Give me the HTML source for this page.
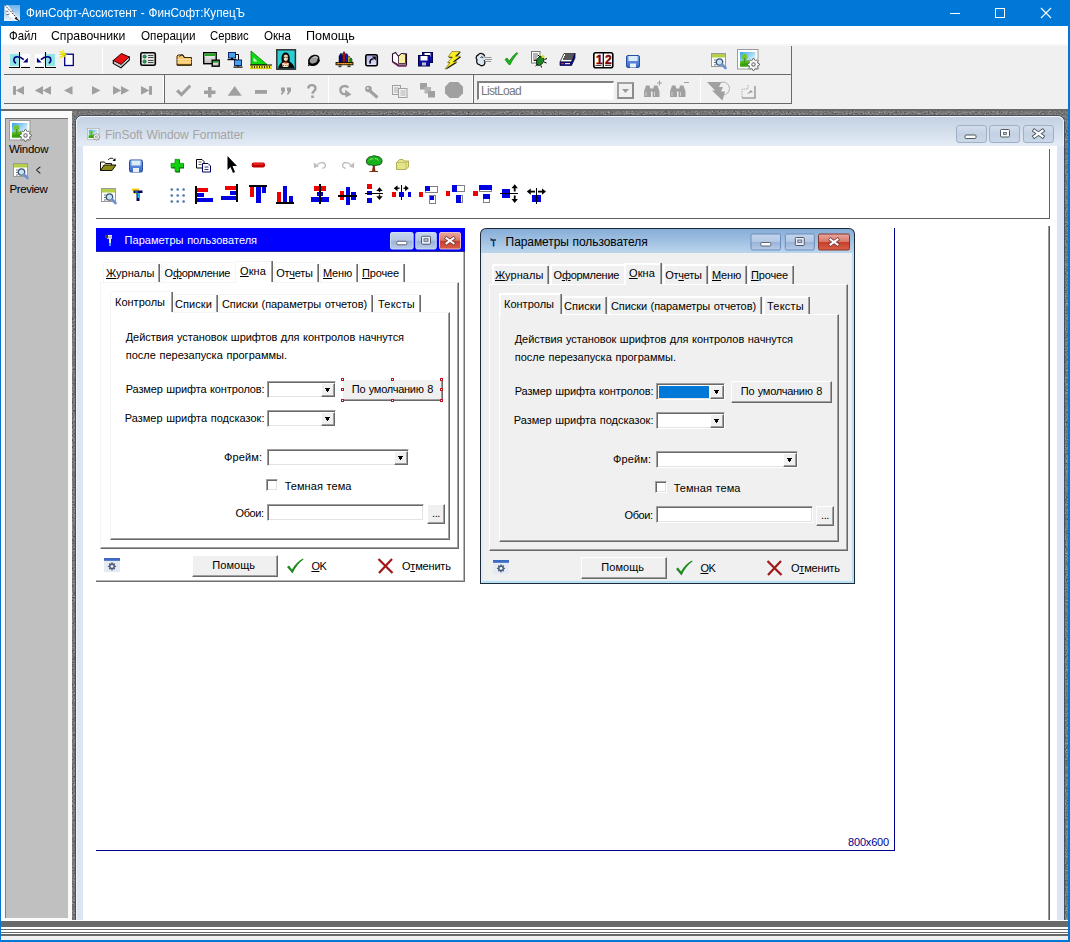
<!DOCTYPE html>
<html lang="ru"><head><meta charset="utf-8"><title>ФинСофт-Ассистент - ФинСофт:КупецЪ</title>
<style>
html,body{margin:0;padding:0}
body{width:1070px;height:942px;position:relative;overflow:hidden;background:#f0f0f0;font-family:'Liberation Sans',sans-serif;font-size:11px}
div,span.t,svg{position:absolute;box-sizing:border-box}
span.t{white-space:pre}
u{text-decoration:underline;text-underline-offset:1px}

</style></head>
<body>
<div style="left:0px;top:0px;width:1070px;height:942px;background:#0078d7;"></div>
<div style="left:1px;top:26px;width:1067px;height:914px;background:#f0f0f0;"></div>
<div style="left:0px;top:0px;width:1070px;height:26px;background:#0078d7;"></div>
<svg style="left:0;top:0" width="1070" height="942" viewBox="0 0 1070 942"><defs><linearGradient id="ga" x1="0" y1="0" x2="0" y2="1"><stop offset="0" stop-color="#6fb0ea"/><stop offset="1" stop-color="#eaf5fc"/></linearGradient></defs><rect x="4" y="5" width="16" height="16" fill="url(#ga)" /><path d="M4.800 5.300l3.200 .200 11.500 14.500-3 .3L11 17.500 6.500 13.500 5 9z" fill="#fff" /><path d="M5 5.300l12.500 13.200" fill="none" stroke="#111" stroke-width="1" stroke-dasharray="1.600 1.100"/><path d="M15.500 17.200l4.300 3.500-.600.600-4.500-2.600z" fill="#111" /><path d="M6 11l2.500 .8M6.500 14.500l3-.3M12 10.500l1.500 1.200" fill="none" stroke="#445" stroke-width="0.8" /></svg>
<span class="t" style="left:26.0px;top:6.3px;font-size:13px;line-height:13px;color:#fff;transform:scaleX(0.9012);transform-origin:0 0;word-spacing:0.6px;">ФинСофт-Ассистент - ФинСофт:КупецЪ</span>
<svg style="left:940px;top:0" width="130" height="26" viewBox="0 0 130 26"><g stroke="#fff" stroke-width="1" fill="none" shape-rendering="crispEdges"><path d="M9.5 13.5h10"/><rect x="55.5" y="8.5" width="9" height="9"/></g><path d="M101 8l10 10M111 8l-10 10" stroke="#fff" stroke-width="1.1" fill="none"/></svg>
<div style="left:1px;top:26px;width:1067px;height:18px;background:#fff;"></div>
<div style="left:1px;top:44px;width:1067px;height:2px;background:#f6f6f6;"></div>
<span class="t" style="left:8.5px;top:29.0px;font-size:13px;line-height:13px;color:#000;transform:scaleX(0.8759);transform-origin:0 0;">Файл</span>
<span class="t" style="left:51.2px;top:29.0px;font-size:13px;line-height:13px;color:#000;transform:scaleX(0.9433);transform-origin:0 0;">Справочники</span>
<span class="t" style="left:140.6px;top:29.0px;font-size:13px;line-height:13px;color:#000;transform:scaleX(0.8978);transform-origin:0 0;">Операции</span>
<span class="t" style="left:210.3px;top:29.0px;font-size:13px;line-height:13px;color:#000;transform:scaleX(0.8691);transform-origin:0 0;">Сервис</span>
<span class="t" style="left:264.0px;top:29.0px;font-size:13px;line-height:13px;color:#000;transform:scaleX(0.8935);transform-origin:0 0;">Окна</span>
<span class="t" style="left:306.2px;top:29.0px;font-size:13px;line-height:13px;color:#000;transform:scaleX(0.9717);transform-origin:0 0;">Помощь</span>
<div style="left:4px;top:46px;width:788px;height:29px;background:#f0f0f0;border-right:1px solid #696969;border-bottom:1px solid #696969;"></div>
<div style="left:4px;top:75px;width:788px;height:29px;background:#f0f0f0;border-right:1px solid #696969;border-bottom:1px solid #696969;"></div>
<div style="left:102px;top:47px;width:1px;height:27px;background:#fff;"></div>
<div style="left:163px;top:76px;width:1px;height:27px;background:#fff;"></div>
<div style="left:164px;top:75px;width:1px;height:28px;background:#696969;"></div>
<div style="left:328px;top:76px;width:1px;height:27px;background:#fff;"></div>
<div style="left:472px;top:76px;width:1px;height:27px;background:#fff;"></div>
<div style="left:473px;top:75px;width:1px;height:28px;background:#696969;"></div>
<div style="left:700px;top:77px;width:1px;height:25px;background:#fff;"></div>
<svg style="left:0;top:0" width="1070" height="942" viewBox="0 0 1070 942"><g shape-rendering="crispEdges"><rect x="10" y="53.5" width="8.7" height="12.8" fill="#8fe4e4" /><rect x="22" y="53.8" width="7.8" height="12.6" fill="#fff" /><rect x="18.7" y="52.2" width="1.4" height="15.6" fill="#000" /><rect x="9" y="66.8" width="11" height="1.1" fill="#000" /><rect x="21" y="66.8" width="9" height="1.1" fill="#000" /></g><g><path d="M15.900 63.300C13 61.500 13.200 56.800 17.200 56.800c2.600 0 4.600.900 6.600 2.800" fill="none" stroke="#000080" stroke-width="1.6" /><path d="M27.800 57.800v4.800h-4.800z" fill="#000080" /></g><g transform="translate(64.700,0) scale(-1,1)" shape-rendering="crispEdges"><rect x="10" y="53.5" width="8.7" height="12.8" fill="#8fe4e4" /><rect x="22" y="53.8" width="7.8" height="12.6" fill="#fff" /><rect x="18.7" y="52.2" width="1.4" height="15.6" fill="#000" /><rect x="9" y="66.8" width="11" height="1.1" fill="#000" /><rect x="21" y="66.8" width="9" height="1.1" fill="#000" /></g><g transform="translate(64.700,0) scale(-1,1)"><path d="M15.900 63.300C13 61.500 13.200 56.800 17.200 56.800c2.600 0 4.600.900 6.600 2.800" fill="none" stroke="#000080" stroke-width="1.6" /><path d="M27.800 57.800v4.800h-4.800z" fill="#000080" /></g><rect x="64.7" y="54.2" width="8.6" height="11.3" fill="#fff" stroke="#000080" stroke-width="1.300"/><path d="M59.500 51l6 6M63 50v7.500M59 54.500h7.500M60 58l5.500-5.500" fill="none" stroke="#e8e000" stroke-width="1.1" /><path d="M113.300 60.500v3l7.700 4.300 8.300-7.800v-3z" fill="#fff" stroke="#111" stroke-width="1.2" /><path d="M113.300 60.500l8.200-7 7.800 3.500-8.300 7.500z" fill="#e81010" stroke="#300000" stroke-width="1" /><path d="M114 62.300l7 3.700 8-7.300" fill="none" stroke="#999" stroke-width="0.7" /><rect x="140.8" y="52.8" width="14.5" height="12.5" fill="#e4e4e4" stroke="#000" stroke-width="1.600" rx="1.500"/><circle cx="144.6" cy="56.6" r="1.5" fill="#28a848" stroke="#053" stroke-width="0.8"/><circle cx="144.6" cy="61.6" r="1.5" fill="#28a848" stroke="#053" stroke-width="0.8"/><path d="M148 55.500h5.500M148 57.500h5.500M148 60.500h5.500M148 62.500h5.500" fill="none" stroke="#222" stroke-width="0.8" /><path d="M177 56v9.300h14.500V57.500H184l-1.300-2.500H178z" fill="#f6c66a" stroke="#3a2a00" stroke-width="1" /><path d="M177.500 59.500h14M177.500 62h14" fill="none" stroke="#ffe2a0" stroke-width="1.2" /><path d="M179.500 56.500l2.500-2 2.500 2" fill="none" stroke="#222" stroke-width="1" /><rect x="177" y="64.3" width="14.5" height="1.2" fill="#3a2a00" /><defs><linearGradient id="wg" x1="0" y1="0" x2="0" y2="1"><stop offset="0" stop-color="#fff"/><stop offset="1" stop-color="#b8b8b8"/></linearGradient></defs><rect x="203.7" y="52.7" width="12.5" height="11" fill="url(#wg)" stroke="#000" stroke-width="1.400"/><rect x="204.4" y="53.4" width="11.1" height="2.6" fill="#28a028" /><rect x="212.2" y="60.2" width="7" height="6" fill="url(#wg)" stroke="#000" stroke-width="1.400"/><rect x="212.9" y="60.9" width="5.6" height="1.8" fill="#28a028" /><rect x="228.5" y="52.5" width="7" height="5.5" fill="#49a0ee" stroke="#0a2a6a" stroke-width="1"/><rect x="227.5" y="59" width="9" height="1.2" fill="#000" /><rect x="231" y="58" width="2" height="1" fill="#000" /><rect x="234.5" y="60" width="7" height="5.5" fill="#49a0ee" stroke="#0a2a6a" stroke-width="1"/><rect x="233.5" y="66.5" width="9" height="1.2" fill="#000" /><rect x="237" y="65.5" width="2" height="1" fill="#000" /><path d="M235.500 54.500h3v5.500" fill="none" stroke="#000" stroke-width="1" /><path d="M251 51v13.500h16z" fill="#10d810" stroke="#0a7a0a" stroke-width="0.8" /><path d="M253.500 57.500v4h4z" fill="#d8ffd8" /><rect x="250" y="65.2" width="22" height="3.6" fill="#f4ec20" /><path d="M250 65h22" fill="none" stroke="#000" stroke-width="1" /><path d="M252 66v2M254.500 66v2M257 66v2M259.500 66v2M262 66v2M264.500 66v2M267 66v2M269.500 66v2" fill="none" stroke="#000" stroke-width="0.8" /><path d="M250 68.600h22" fill="none" stroke="#c8b800" stroke-width="0.8" /><rect x="276.8" y="49.8" width="18.6" height="19.4" fill="#28d0d4" stroke="#303030" stroke-width="1.500"/><path d="M278 68.500c.5-3 2-5 4-6.500-.8-2.500-.8-6 .8-8.200 1.200-1.800 4.200-1.800 5.600 0 1.600 2.200 1.600 5.200 1.200 7.700 2.500 1.500 4.500 4 5 7z" fill="#080808" /><path d="M283.800 56c0-1.800 4-1.800 4 0v3.200c0 2.300-4 2.300-4 0z" fill="#f0dcb8" /><path d="M284 57.300h1.300M286.300 57.300h1.300" fill="none" stroke="#000" stroke-width="0.8" /><path d="M282 63.500c1-1.200 5.500-1.200 7 0l-.8 3.500h-5.400z" fill="#f4e4c0" /><path d="M284.700 61.500h2.200v2h-2.200z" fill="#d02818" /><path d="M283 65.500h1M285.300 65.500h1M287.500 65.500h1" fill="none" stroke="#c03020" stroke-width="1" /><path d="M309 62.500c-1-3 1.500-6 5-6.800 3-.7 5 .8 4.600 3.500-.5 3.200-3.500 5.300-6.600 5.300-1.300 0-2.600-.5-3-2z" fill="#9c9c9c" stroke="#0c0c0c" stroke-width="1.7" /><path d="M313 57.500c1.500-.8 3.500-.8 4.500.5" fill="none" stroke="#c8c8c8" stroke-width="1.3" /><path d="M308.200 65.800l2.300-2.300" fill="none" stroke="#000" stroke-width="1.3" /><path d="M309 62.500c.5 2 2 2.500 3.500 2.500 3 0 6-2 6.500-5.300" fill="none" stroke="#000" stroke-width="2.2" /><path d="M339 63v-7l2-3 1.500 3v7z" fill="#000090" stroke="#000" stroke-width="0.5" /><path d="M342.500 63v-9l1.500-2.500 1.500 2.500v9z" fill="#a01010" stroke="#000" stroke-width="0.5" /><path d="M345.500 63v-8l1.200-1.500 1.200 1.500v8z" fill="#1818c0" stroke="#000" stroke-width="0.5" /><path d="M348 63v-6l1-1 1 1v6z" fill="#e8e020" stroke="#000" stroke-width="0.5" /><path d="M350 63v-4l1-1 1 1v4z" fill="#20b020" stroke="#000" stroke-width="0.5" /><rect x="336" y="62.5" width="17" height="2.3" fill="#e07818" stroke="#000" stroke-width="0.800"/><path d="M338 63.700h13" fill="none" stroke="#ffe060" stroke-width="0.8" stroke-dasharray="1 1.400"/><rect x="339" y="64.8" width="2" height="2" fill="#e8e020" stroke="#000" stroke-width="0.700"/><rect x="348" y="64.8" width="2" height="2" fill="#e8e020" stroke="#000" stroke-width="0.700"/><defs><linearGradient id="lav" x1="0" y1="0" x2="0" y2="1"><stop offset="0" stop-color="#a8a8e8"/><stop offset="1" stop-color="#e8e8fa"/></linearGradient></defs><rect x="365.8" y="54.8" width="11.5" height="11" fill="url(#lav)" stroke="#000" stroke-width="1.600" rx="1.500"/><path d="M370.200 63.600c-.800-3 .800-4.800 3.400-4.800" fill="none" stroke="#000" stroke-width="1.6" /><path d="M372 56.600h3.800v3.800z" fill="#000" /><path d="M392.500 54l3-1.500 3 4 3-3 5 .5v11h-8l-6-3.500z" fill="#fff" stroke="#2a0a2a" stroke-width="1.1" /><path d="M398.500 56.500l3-3 4 .5v9.500h-7z" fill="#f4f0a0" stroke="#2a0a2a" stroke-width="0.8" /><path d="M392.500 62l6 4h8" fill="none" stroke="#702058" stroke-width="1.3" /><rect x="422.5" y="52.5" width="10" height="10" fill="#1010a0" stroke="#00004a" stroke-width="1"/><rect x="424.5" y="53" width="6" height="3.5" fill="#fff" /><rect x="418.5" y="55.5" width="11" height="10.5" fill="#1010a0" stroke="#00004a" stroke-width="1"/><rect x="420.5" y="56" width="7" height="4.5" fill="#fff" /><rect x="422" y="62.5" width="4" height="3" fill="#c0c0d8" /><path d="M452 51.500h8l-4.500 4.700h5l-7.500 5.500h3.500l-11.500 7.300 5-6.500h-2.500l5-5.500h-4.500z" fill="#000" transform="translate(0.800,0.800)"/><path d="M452 51.500h8l-4.500 4.700h5l-7.500 5.500h3.500l-11.500 7.300 5-6.500h-2.500l5-5.500h-4.500z" fill="#f8f020" stroke="#504000" stroke-width="0.5" /><path d="M484.500 56.500c0-3.200-4.800-4.200-6.300-1.500-2.200.5-2.700 3.500-1.200 4.800-1 2.200.200 4.700 2.500 4.900 1.500 1.800 4.700 1.200 5.200-1 .5-1.500 0-2.700-.700-3.400" fill="#dce8f4" stroke="#101010" stroke-width="1.3" /><path d="M480.500 57.500c1-1 2.500-.5 2.500.7" fill="none" stroke="#000" stroke-width="0.9" /><path d="M484.500 57.500h7M485 59.500h7M484.500 61.500h6.500" fill="none" stroke="#8a8a8a" stroke-width="0.9" /><path d="M505 59.500l2-1.500 2.500 3c2-3.500 4.500-6.500 7.500-8.500l.8 1c-3 3-5.500 6.500-7.500 11h-1.500z" fill="#18b818" stroke="#0a6a0a" stroke-width="0.6" /><rect x="531.5" y="51.5" width="8.5" height="11.5" fill="#fff" stroke="#777" stroke-width="1"/><path d="M533 54h5M533 56h5M533 58h4M533 60h3" fill="none" stroke="#444" stroke-width="0.8" /><path d="M536.500 62c0-3 2-5.500 4.500-5.500s3.500 2.500 2.500 5-3 4-5 4-2-1.500-2-3.500z" fill="#208028" stroke="#002a00" stroke-width="0.9" /><circle cx="543" cy="56.5" r="1.6" fill="#e8e020"/><path d="M540 57l-2-2M544.500 59.500l2.500-1M544 62l2.500 1M541 65.500l.5 2M537 60l-3 .5M538 64l-2.500 2" fill="none" stroke="#000" stroke-width="1" /><path d="M560 62l4-8.500h11l-3.500 8.500z" fill="#fff" stroke="#000" stroke-width="0.7" /><path d="M565 55h9.500M564 57h9.500M563 59h9.500" fill="none" stroke="#202020" stroke-width="1.5" /><path d="M560 62h11.500l3.500-8.500v4.500l-3.500 7.500h-11.500z" fill="#101088" stroke="#000040" stroke-width="0.7" /><rect x="561" y="63" width="3" height="1.2" fill="#e02020" /><rect x="565" y="63" width="5" height="1.2" fill="#e0e0e0" /><rect x="593.8" y="52.8" width="19" height="15" fill="#fff" stroke="#000" stroke-width="1.600" rx="2"/><path d="M603.300 53v15" fill="none" stroke="#000" stroke-width="1.2" /><path d="M595.500 65.500h6M605 65.500h6" fill="none" stroke="#333" stroke-width="0.9" /><defs><linearGradient id="fb" x1="0" y1="0" x2="0" y2="1"><stop offset="0" stop-color="#7aa4ec"/><stop offset="1" stop-color="#3a68c8"/></linearGradient></defs><rect x="626.5" y="55.5" width="13" height="12" fill="url(#fb)" stroke="#2a4fa0" stroke-width="1" rx="1.500"/><rect x="628.5" y="56" width="9" height="5" fill="#d8ecfa" /><rect x="630" y="63.5" width="6" height="4" fill="#e8f0fa" /><g transform="translate(711,53)"><rect x="0.5" y="0.5" width="14" height="13" fill="#fff" stroke="#9a9a9a" stroke-width="1"/><rect x="1" y="1" width="13" height="3.5" fill="#b4d048" /><path d="M3 7h2M3 9.500h2M3 12h2" fill="none" stroke="#777" stroke-width="1" /><circle cx="8.5" cy="9" r="3.2" fill="#c9e2f2" stroke="#3a5878" stroke-width="1.3"/><path d="M11 11.500l3.500 3.500" fill="none" stroke="#6f8fd0" stroke-width="2.6" stroke-linecap="round"/></g><g transform="translate(737,49) scale(1)"><rect x="0.5" y="0.5" width="20.5" height="19.5" fill="#fff" stroke="#9a9a9a" stroke-width="1"/><defs><linearGradient id="sky" x1="0" y1="0" x2="1" y2="1"><stop offset="0" stop-color="#38a4ec"/><stop offset="0.700" stop-color="#d8f2fc"/></linearGradient></defs><rect x="3" y="3" width="15.5" height="14.5" fill="url(#sky)" /><path d="M3 12.500Q8 10 18.500 12.500v5H3z" fill="#52bc1c" /><path d="M3 15Q9 13 18.500 15.500v2H3z" fill="#3aa010" /><circle cx="7.5" cy="8" r="3" fill="#74c438"/><rect x="7" y="9" width="1.3" height="5" fill="#4a9a20" /><path d="M15.91 9.53L17.09 9.53L17.78 11.29L18.57 11.62L20.31 10.86L21.14 11.69L20.38 13.43L20.71 14.22L22.47 14.91L22.47 16.09L20.71 16.78L20.38 17.57L21.14 19.31L20.31 20.14L18.57 19.38L17.78 19.71L17.09 21.47L15.91 21.47L15.22 19.71L14.43 19.38L12.69 20.14L11.86 19.31L12.62 17.57L12.29 16.78L10.53 16.09L10.53 14.91L12.29 14.22L12.62 13.43L11.86 11.69L12.69 10.86L14.43 11.62L15.22 11.29z" fill="#fff" stroke="#6c6c6c" stroke-width="1" /><circle cx="16.5" cy="15.5" r="1.7" fill="#fff" stroke="#6c6c6c" stroke-width="1.1"/></g><g transform="translate(0,-0.700)"><rect x="13" y="86.8" width="3" height="8.7" fill="#a0a0a0" /><path d="M24 86.800v8.700l-8.300-4.350z" fill="#a0a0a0" /><path d="M43 86.800v8.700l-8.300-4.350zM51 86.800v8.700l-8.300-4.350z" fill="#a0a0a0" /><path d="M72.500 86.800v8.700l-8.500-4.350z" fill="#a0a0a0" /><path d="M92 86.800v8.700l8.500-4.350z" fill="#a0a0a0" /><path d="M113 86.800v8.700l8.300-4.350zM121 86.800v8.700l8.300-4.350z" fill="#a0a0a0" /><path d="M141 86.800v8.700l8.300-4.350z" fill="#a0a0a0" /><rect x="149" y="86.8" width="3" height="8.7" fill="#a0a0a0" /></g><path d="M176 91.500l2.300-2.300 3.200 3.200 7.700-8 2 2.300-9.700 10z" fill="#a0a0a0" /><path d="M208 87h3.500v3.500h4v3.500h-4v3.500h-3.500v-3.500h-4v-3.500h4z" fill="#a0a0a0" /><path d="M234.700 86l7 9.800h-14z" fill="#a0a0a0" /><rect x="255" y="90" width="12" height="3.8" fill="#a0a0a0" /><path d="M281 87.500h4v3.500l-2.500 3.500h-1.800l1.500-3.500H281zM287 87.500h4v3.500l-2.500 3.500h-1.800l1.500-3.500H287z" fill="#a0a0a0" /><path d="M308.300 88.500c0-4.500 7.200-4.500 7.200 0 0 2.500-3 2.800-3 5.300" fill="none" stroke="#a0a0a0" stroke-width="2.4" /><rect x="311.2" y="95.5" width="2.6" height="2.5" fill="#a0a0a0" /><path d="M348.500 87.500c-3.500-3-9-1-8 3.500.600 2.500 3 3.500 5.500 3" fill="none" stroke="#a0a0a0" stroke-width="2.3" /><path d="M345 89.500l6.500 5-6 3z" fill="#a0a0a0" /><circle cx="368.5" cy="89" r="3.3" fill="#a0a0a0"/><path d="M370 91l7.500 6.500" fill="none" stroke="#a0a0a0" stroke-width="3" /><circle cx="367.8" cy="88.3" r="1" fill="#f0f0f0"/><rect x="392.5" y="85.5" width="8" height="9" fill="#f0f0f0" stroke="#a0a0a0" stroke-width="1"/><path d="M394 88h4.500M394 90h4.500M394 92h4.500" fill="none" stroke="#a0a0a0" stroke-width="0.8" /><rect x="398.5" y="88.5" width="8.5" height="9" fill="#f0f0f0" stroke="#a0a0a0" stroke-width="1"/><path d="M400.500 91h5M400.500 93h5M400.500 95h5" fill="none" stroke="#a0a0a0" stroke-width="0.8" /><rect x="420" y="83" width="7" height="6.5" fill="#a0a0a0" /><rect x="424.5" y="87" width="6.5" height="6.5" fill="#b4b4b4" /><rect x="428" y="91" width="7" height="6.5" fill="#a0a0a0" /><path d="M449.700 82h8.600l4.700 4.700v6.600l-4.700 4.700h-8.600L445 93.300v-6.600z" fill="#a0a0a0" /><path d="M646.0 85.500h3.500l1.500 6v5.500h-7v-5.500z" fill="#a0a0a0" /><path d="M654.0 85.500h3.500l2 6v5.500h-7v-5.500z" fill="#a0a0a0" /><rect x="650" y="88.5" width="3.5" height="3" fill="#a0a0a0" /><path d="M646.0 92v4M654.5 92v4" fill="none" stroke="#d0d0d0" stroke-width="1" /><path d="M657.0 83h5M659.5 80.500v5" fill="none" stroke="#a0a0a0" stroke-width="1" /><path d="M672.0 85.500h3.500l1.500 6v5.500h-7v-5.500z" fill="#a0a0a0" /><path d="M680.0 85.500h3.500l2 6v5.500h-7v-5.500z" fill="#a0a0a0" /><rect x="676" y="88.5" width="3.5" height="3" fill="#a0a0a0" /><path d="M672.0 92v4M680.5 92v4" fill="none" stroke="#d0d0d0" stroke-width="1" /><path d="M684.0 82.500h5" fill="none" stroke="#a0a0a0" stroke-width="1" /><circle cx="723" cy="88.5" r="6.5" fill="#f0f0f0" stroke="#b0b0b0" stroke-width="1"/><path d="M707 82h14.500l-2.500 5h4l-2 4.500h4l-2.500 9-10.500-10h3z" fill="#a0a0a0" /><path d="M742 98h13v-12" fill="none" stroke="#a0a0a0" stroke-width="1.6" /><path d="M742 97v-8h6v-4" fill="none" stroke="#a0a0a0" stroke-width="1" stroke-dasharray="1.200 1.200"/><path d="M747 94l4-4 2 2z" fill="#a0a0a0" /></svg><span class="t" style="left:596px;top:53.500px;font-size:12px;line-height:12px;font-weight:bold;color:#800000;letter-spacing:2.400px;-webkit-text-stroke:0.400px #800000">12</span>
<div style="left:477px;top:81px;width:137px;height:19px;background:#fff;border:1px solid #fafafa;border-top:2px solid #808080;border-left:2px solid #808080;"></div>
<span class="t" style="left:481.0px;top:84.5px;font-size:12px;line-height:12px;color:#787878;letter-spacing:-0.672px;">ListLoad</span>
<div style="left:617px;top:82px;width:17px;height:17px;background:#f0f0f0;border:2px solid #8c8c8c;border-top-color:#a0a0a0;border-left-color:#a0a0a0;"></div>
<svg style="left:622px;top:89px" width="7" height="4"><path d="M0 0h7l-3.500 4z" fill="#9a9a9a"/></svg>
<div style="left:1px;top:109px;width:1067px;height:812px;background:#757575;"></div>
<svg style="left:1px;top:109px" width="1067" height="812"><filter id="nz" x="0" y="0" width="100%" height="100%" color-interpolation-filters="sRGB"><feTurbulence type="fractalNoise" baseFrequency="0.55 0.7" numOctaves="2" seed="7"/><feColorMatrix type="matrix" values="0.3 0.3 0.3 0 0.02  0.3 0.3 0.3 0 0.02  0.3 0.3 0.3 0 0.02  0 0 0 0 1"/></filter><rect width="75" height="812" filter="url(#nz)"/><rect x="74" width="993" height="8" filter="url(#nz)"/><rect x="1060" width="7" height="812" filter="url(#nz)"/></svg>
<div style="left:1px;top:109px;width:1067px;height:2px;background:#696969;"></div>
<div style="left:1px;top:111px;width:71px;height:809px;background:#fafafa;"></div>
<div style="left:5px;top:118px;width:63px;height:800px;background:#c0c0c0;border-left:1px solid #808080;border-top:1px solid #707070;"></div>
<svg style="left:0;top:0" width="1070" height="942" viewBox="0 0 1070 942"><g transform="translate(9,120) scale(1)"><rect x="0.5" y="0.5" width="20.5" height="19.5" fill="#fff" stroke="#9a9a9a" stroke-width="1"/><defs><linearGradient id="sky" x1="0" y1="0" x2="1" y2="1"><stop offset="0" stop-color="#38a4ec"/><stop offset="0.700" stop-color="#d8f2fc"/></linearGradient></defs><rect x="3" y="3" width="15.5" height="14.5" fill="url(#sky)" /><path d="M3 12.500Q8 10 18.500 12.500v5H3z" fill="#52bc1c" /><path d="M3 15Q9 13 18.500 15.500v2H3z" fill="#3aa010" /><circle cx="7.5" cy="8" r="3" fill="#74c438"/><rect x="7" y="9" width="1.3" height="5" fill="#4a9a20" /><path d="M15.91 9.53L17.09 9.53L17.78 11.29L18.57 11.62L20.31 10.86L21.14 11.69L20.38 13.43L20.71 14.22L22.47 14.91L22.47 16.09L20.71 16.78L20.38 17.57L21.14 19.31L20.31 20.14L18.57 19.38L17.78 19.71L17.09 21.47L15.91 21.47L15.22 19.71L14.43 19.38L12.69 20.14L11.86 19.31L12.62 17.57L12.29 16.78L10.53 16.09L10.53 14.91L12.29 14.22L12.62 13.43L11.86 11.69L12.69 10.86L14.43 11.62L15.22 11.29z" fill="#fff" stroke="#6c6c6c" stroke-width="1" /><circle cx="16.5" cy="15.5" r="1.7" fill="#fff" stroke="#6c6c6c" stroke-width="1.1"/></g><g transform="translate(13,163)"><rect x="0.5" y="0.5" width="14" height="13" fill="#fff" stroke="#9a9a9a" stroke-width="1"/><rect x="1" y="1" width="13" height="3.5" fill="#b4d048" /><path d="M3 7h2M3 9.500h2M3 12h2" fill="none" stroke="#777" stroke-width="1" /><circle cx="8.5" cy="9" r="3.2" fill="#c9e2f2" stroke="#3a5878" stroke-width="1.3"/><path d="M11 11.500l3.500 3.500" fill="none" stroke="#6f8fd0" stroke-width="2.6" stroke-linecap="round"/></g></svg>
<span class="t" style="left:9.0px;top:144.1px;font-size:11.5px;line-height:11.5px;color:#000;letter-spacing:-0.284px;">Window</span>
<span class="t" style="left:35.7px;top:163.1px;font-size:14px;line-height:14px;color:#000;transform:scaleX(0.58);transform-origin:0 0;color:#111;">&lt;</span>
<span class="t" style="left:9.6px;top:184.0px;font-size:11.5px;line-height:11.5px;color:#000;letter-spacing:-0.444px;">Preview</span>
<div style="left:75px;top:115px;width:990px;height:806px;background:#dbe5f3;border-radius:7px 7px 0 0;border:1px solid #454e5a;border-bottom:none;"></div>
<div style="left:76px;top:116px;width:988px;height:30px;background:linear-gradient(#c3d1e2,#e4ecf6);border-radius:6px 6px 0 0;border-top:1px solid #f4f8fc;border-left:1px solid #eef3f9;border-right:1px solid #eef3f9;"></div>
<div style="left:76px;top:146px;width:1px;height:775px;background:#eef3f9;"></div>
<div style="left:83px;top:146px;width:974px;height:775px;background:#fff;"></div>
<svg style="left:0;top:0" width="1070" height="942" viewBox="0 0 1070 942"><g transform="translate(87,128) scale(0.57)"><rect x="0.5" y="0.5" width="20.5" height="19.5" fill="#fff" stroke="#9a9a9a" stroke-width="1"/><defs><linearGradient id="sky" x1="0" y1="0" x2="1" y2="1"><stop offset="0" stop-color="#38a4ec"/><stop offset="0.700" stop-color="#d8f2fc"/></linearGradient></defs><rect x="3" y="3" width="15.5" height="14.5" fill="url(#sky)" /><path d="M3 12.500Q8 10 18.500 12.500v5H3z" fill="#52bc1c" /><path d="M3 15Q9 13 18.500 15.500v2H3z" fill="#3aa010" /><circle cx="7.5" cy="8" r="3" fill="#74c438"/><rect x="7" y="9" width="1.3" height="5" fill="#4a9a20" /><path d="M15.91 9.53L17.09 9.53L17.78 11.29L18.57 11.62L20.31 10.86L21.14 11.69L20.38 13.43L20.71 14.22L22.47 14.91L22.47 16.09L20.71 16.78L20.38 17.57L21.14 19.31L20.31 20.14L18.57 19.38L17.78 19.71L17.09 21.47L15.91 21.47L15.22 19.71L14.43 19.38L12.69 20.14L11.86 19.31L12.62 17.57L12.29 16.78L10.53 16.09L10.53 14.91L12.29 14.22L12.62 13.43L11.86 11.69L12.69 10.86L14.43 11.62L15.22 11.29z" fill="#fff" stroke="#6c6c6c" stroke-width="1" /><circle cx="16.5" cy="15.5" r="1.7" fill="#fff" stroke="#6c6c6c" stroke-width="1.1"/></g></svg>
<span class="t" style="left:105.0px;top:128.8px;font-size:12px;line-height:12px;color:#a4a4a4;letter-spacing:-0.066px;word-spacing:0.6px;">FinSoft Window Formatter</span>
<div style="left:956px;top:125px;width:31px;height:18px;border:1px solid #9fb0c6;border-radius:3px;background:linear-gradient(#d3deec,#c3d1e3 50%,#cbd8e8);"></div>
<div style="left:989px;top:125px;width:31px;height:18px;border:1px solid #9fb0c6;border-radius:3px;background:linear-gradient(#d3deec,#c3d1e3 50%,#cbd8e8);"></div>
<div style="left:1023px;top:125px;width:31px;height:18px;border:1px solid #9fb0c6;border-radius:3px;background:linear-gradient(#d3deec,#c3d1e3 50%,#cbd8e8);"></div>
<svg style="left:0;top:0" width="1070" height="942" viewBox="0 0 1070 942"><rect x="965" y="135" width="11" height="3.5" fill="#fff" stroke="#505860" stroke-width="1" rx="1"/><rect x="1000.5" y="129.5" width="9" height="7.5" fill="#fff" stroke="#505860" stroke-width="1" rx="1"/><rect x="1003.5" y="132.5" width="3" height="2" fill="#d0d8e4" stroke="#505860" stroke-width="0.800"/><path d="M1034.500 130.800l8 5.600M1042.500 130.800l-8 5.600" fill="none" stroke="#505860" stroke-width="4" stroke-linecap="square"/><path d="M1034.500 130.800l8 5.600M1042.500 130.800l-8 5.600" fill="none" stroke="#fff" stroke-width="2.2" stroke-linecap="square"/></svg>
<div style="left:96px;top:218px;width:954px;height:1px;background:#606060;"></div>
<div style="left:1049px;top:149px;width:1px;height:70px;background:#606060;"></div>
<div style="left:1048px;top:226px;width:2px;height:694px;background:#5a5a5a;border-left:1px solid #9a9a9a;"></div>
<svg style="left:0;top:0" width="1070" height="942" viewBox="0 0 1070 942"><path d="M100.500 170.500v-8.500h4l1 1.500h6v2" fill="#fffbe0" stroke="#000" stroke-width="0.9" /><path d="M100.500 170.500l3.500-5.500h12l-4 5.500z" fill="#8c8c18" stroke="#000" stroke-width="0.9" /><path d="M108 160c1.500-2 4.500-2.500 6-.5" fill="none" stroke="#000" stroke-width="0.9" /><path d="M115.500 158v3h-3z" fill="#000" /><rect x="129.5" y="160" width="13" height="12" fill="url(#fb)" stroke="#2a4fa0" stroke-width="1" rx="1.500"/><rect x="131.5" y="160.5" width="9" height="5" fill="#d8ecfa" /><rect x="133" y="168" width="6" height="4" fill="#e8f0fa" /><path d="M175.500 160h4.500v4h4v4.500h-4v4h-4.500v-4h-4v-4.500h4z" fill="#006000" /><path d="M175 159.300h4.500v4h4v4.300h-4v4h-4.500v-4h-4v-4.300h4z" fill="#10d010" stroke="#008000" stroke-width="0.6" /><path d="M196.500 159.500h5.500l2 2v6.500h-7.500z" fill="#fff" stroke="#000" stroke-width="1" /><path d="M198.500 162h3M198.500 164.500h3" fill="none" stroke="#333" stroke-width="0.8" /><path d="M202.500 163.500h5.500l2.500 2.500v6h-8z" fill="#fff" stroke="#000060" stroke-width="1" /><path d="M204.500 167h4M204.500 169.500h4" fill="none" stroke="#000060" stroke-width="0.8" /><path d="M227.500 156v14l3-3 2.500 6 2-1-2.500-6h4.500z" fill="#000" /><rect x="251.7" y="162.5" width="13.3" height="5" fill="#c00000" rx="2"/><rect x="253" y="163" width="10.5" height="2" fill="#e82020" rx="1"/><path d="M317 165.500C318.500 162 324 161.500 325.300 164.500c.700 2-.800 3.500-3 3.800" fill="none" stroke="#bdbdbd" stroke-width="1.3" /><path d="M313.700 162.300l.300 5.700 5-1.500z" fill="#bdbdbd" /><path d="M351 165.500C349.500 162 344 161.500 342.700 164.500c-.700 2 .800 3.500 3 3.800" fill="none" stroke="#bdbdbd" stroke-width="1.3" /><path d="M354.300 162.300l-.300 5.700-5-1.500z" fill="#bdbdbd" /><path d="M373 165l-1 6h-2.500v1h8.500v-1h-2.500l-1-6z" fill="#803010" /><path d="M366.500 162c-.5-3 2-5.500 5-5.500 1.500-1 4-1 5.500 0 3 0 5.500 2.500 5 5 0 2.500-2.500 4-4.500 3.500-2 1-4.500 1-6 0-3 .5-5-1-5-3z" fill="#18b018" stroke="#003800" stroke-width="0.8" /><path d="M369 160.500c1-1.500 3-2 4.500-1.500M375 158.500c1.500 0 3 1 3.500 2" fill="none" stroke="#80f080" stroke-width="1" /><path d="M396.500 162.500l3-3h3.500l1 1.500h4.500v6l-2.500 2.500h-9.500z" fill="#e4e488" stroke="#a8a850" stroke-width="0.9" /><path d="M396.500 162.500h9.500v7M406 162.500l2.500-1.500" fill="none" stroke="#b8b860" stroke-width="0.8" /><g transform="translate(101,188)"><rect x="0.5" y="0.5" width="14" height="13" fill="#fff" stroke="#9a9a9a" stroke-width="1"/><rect x="1" y="1" width="13" height="3.5" fill="#b4d048" /><path d="M3 7h2M3 9.500h2M3 12h2" fill="none" stroke="#777" stroke-width="1" /><circle cx="8.5" cy="9" r="3.2" fill="#c9e2f2" stroke="#3a5878" stroke-width="1.3"/><path d="M11 11.500l3.500 3.500" fill="none" stroke="#6f8fd0" stroke-width="2.6" stroke-linecap="round"/></g><path d="M132 188.500h7v2.500h-2.500v3H134v-3h-2z" fill="#f0d010" /><path d="M133.500 190.500h9v2.500h-3v8h-3v-8h-3z" fill="#000060" /><path d="M137.500 193h1.500v5h-1.500zM135 191.500h3v1h-3z" fill="#20c0f0" /><circle cx="171.8" cy="189.5" r="1.3" fill="#4878a8"/><circle cx="171.8" cy="195.5" r="1.3" fill="#4878a8"/><circle cx="171.8" cy="201.5" r="1.3" fill="#4878a8"/><circle cx="177.7" cy="189.5" r="1.3" fill="#4878a8"/><circle cx="177.7" cy="195.5" r="1.3" fill="#4878a8"/><circle cx="177.7" cy="201.5" r="1.3" fill="#4878a8"/><circle cx="183.6" cy="189.5" r="1.3" fill="#4878a8"/><circle cx="183.6" cy="195.5" r="1.3" fill="#4878a8"/><circle cx="183.6" cy="201.5" r="1.3" fill="#4878a8"/><path d="M379.500 187.300l3.200 3.700h-6.400zM379.500 200l3.200-3.700h-6.400z" fill="#000" /><rect x="378.8" y="190.5" width="1.4" height="1.7" fill="#000" /><rect x="378.8" y="194.5" width="1.4" height="2" fill="#000" /><path d="M393.800 188.200l3.700-3v6zM408.800 188.200l-3.700-3v6z" fill="#000" /><rect x="397" y="187.5" width="2.5" height="1.4" fill="#000" /><rect x="403.5" y="187.5" width="2.5" height="1.4" fill="#000" /><path d="M514.700 184.300l3.200 4h-6.400zM514.700 203l3.200-4h-6.400z" fill="#000" /><rect x="513.8" y="188" width="1.8" height="3.5" fill="#000" /><rect x="513.8" y="195.5" width="1.8" height="3.5" fill="#000" /><path d="M526.800 191.600l4-3.200v6.400zM546 191.600l-4-3.200v6.400z" fill="#000" /><rect x="530.5" y="190.7" width="4.5" height="1.8" fill="#000" /><rect x="538" y="190.7" width="4.5" height="1.8" fill="#000" /></svg><svg style="left:0;top:0" width="1070" height="942" viewBox="0 0 1070 942" shape-rendering="crispEdges"><rect x="195" y="186" width="1.7" height="17.7" fill="#000" /><rect x="197" y="188" width="11" height="3.7" fill="#f00000" /><rect x="197" y="193" width="6.5" height="3.5" fill="#0000e0" /><rect x="197" y="198" width="16" height="3.7" fill="#0000e0" /><rect x="236" y="184" width="1.7" height="17.7" fill="#000" /><rect x="225" y="186" width="11" height="3.7" fill="#f00000" /><rect x="229.5" y="190.5" width="6.5" height="4" fill="#0000e0" /><rect x="221" y="196" width="15" height="3.7" fill="#0000e0" /><rect x="249" y="185" width="18" height="1.5" fill="#000" /><rect x="250" y="186.5" width="4" height="10" fill="#f00000" /><rect x="256.2" y="186.5" width="4.3" height="16.2" fill="#0000e0" /><rect x="262.4" y="186.5" width="3.7" height="6" fill="#0000e0" /><rect x="276.2" y="202.3" width="17.5" height="1.5" fill="#000" /><rect x="277" y="192" width="3.7" height="10.3" fill="#f00000" /><rect x="282.7" y="186.4" width="4" height="16" fill="#0000e0" /><rect x="289.3" y="196" width="3.7" height="6.3" fill="#0000e0" /><rect x="314" y="186.4" width="12" height="4.2" fill="#f00000" /><rect x="317" y="192" width="6" height="4" fill="#0000e0" /><rect x="311" y="197" width="18" height="4.7" fill="#0000e0" /><rect x="319.3" y="184" width="1.5" height="20" fill="#000" /><rect x="340" y="191.2" width="4" height="9.2" fill="#f00000" /><rect x="346" y="187.3" width="3.5" height="17.4" fill="#0000e0" /><rect x="351.3" y="192" width="4.7" height="7.5" fill="#0000e0" /><rect x="338" y="195" width="19" height="1.5" fill="#000" /><rect x="367.4" y="184.3" width="4.6" height="4.3" fill="#f00000" /><rect x="367.4" y="191.2" width="4.6" height="4" fill="#0000e0" /><rect x="367.4" y="198.4" width="4.6" height="4.2" fill="#0000e0" /><rect x="365" y="192.7" width="17.7" height="1" fill="#000" /><rect x="401" y="185" width="1" height="15" fill="#000" /><rect x="392" y="192" width="3.5" height="4.8" fill="#f00000" /><rect x="399" y="192" width="5" height="5" fill="#0000e0" /><rect x="408" y="192" width="3" height="5" fill="#0000e0" /><rect x="419" y="192" width="4" height="4.8" fill="#f00000" /><rect x="425.5" y="186.5" width="11.7" height="5.5" fill="#fff" stroke="#808080" stroke-width="1"/><rect x="425" y="186" width="5" height="5" fill="#0000e0" /><rect x="429.5" y="195.5" width="6" height="7.6" fill="#fff" stroke="#808080" stroke-width="1"/><rect x="429.5" y="195.5" width="4.5" height="4.5" fill="#0000e0" /><rect x="446" y="191" width="4" height="5" fill="#f00000" /><rect x="452.5" y="185.5" width="11.7" height="5.6" fill="#fff" stroke="#808080" stroke-width="1"/><rect x="452" y="185" width="5" height="6.6" fill="#0000e0" /><rect x="456.5" y="195" width="6" height="7.2" fill="#fff" stroke="#808080" stroke-width="1"/><rect x="456" y="194.5" width="5" height="8.2" fill="#0000e0" /><rect x="473" y="191" width="4.5" height="5" fill="#f00000" /><rect x="479.5" y="185.5" width="12" height="5.6" fill="#fff" stroke="#808080" stroke-width="1"/><rect x="479" y="185" width="13" height="4.5" fill="#0000e0" /><rect x="483.5" y="194.7" width="6" height="7.4" fill="#fff" stroke="#808080" stroke-width="1"/><rect x="483" y="194.2" width="7" height="4.8" fill="#0000e0" /><rect x="502.2" y="189" width="7.8" height="8.8" fill="#0000e0" /><rect x="500" y="192.7" width="18" height="1" fill="#000" /><rect x="532.3" y="195" width="8.5" height="6.7" fill="#0000e0" /><rect x="536" y="188" width="1" height="16" fill="#000" /></svg>
<div style="left:894px;top:228px;width:1px;height:623px;background:#00008b;"></div>
<div style="left:96px;top:850px;width:799px;height:1px;background:#00008b;"></div>
<span class="t" style="left:848.0px;top:836.7px;font-size:11px;line-height:11px;color:#00008b;letter-spacing:-0.174px;">800x600</span>
<div style="left:1px;top:920px;width:1067px;height:1px;background:#fff;"></div>
<div style="left:1px;top:921px;width:1067px;height:6px;background:#696969;"></div>
<div style="left:1px;top:927px;width:1067px;height:2px;background:#fff;"></div>
<div style="left:1px;top:929px;width:1067px;height:1px;background:#696969;"></div>
<div style="left:1px;top:930px;width:1067px;height:2px;background:#fff;"></div>
<div style="left:1px;top:932px;width:1067px;height:1px;background:#696969;"></div>
<div style="left:1px;top:933px;width:1067px;height:1px;background:#fff;"></div>
<div style="left:1px;top:934px;width:1067px;height:2px;background:#696969;"></div>
<div style="left:1px;top:936px;width:1067px;height:4px;background:#f0f0f0;"></div>
<div style="left:96px;top:228px;width:369px;height:354px;background:#fff;border-right:1px solid #707070;border-bottom:1px solid #707070;box-shadow:inset -1px -1px 0 #b4b4b4;"></div>
<div style="left:96px;top:228px;width:369px;height:24px;background:#0000ff;border-bottom:1px solid #2a2a9a;"></div>
<span class="t" style="left:124.6px;top:235.2px;font-size:11px;line-height:11px;color:#fff;letter-spacing:0.025px;word-spacing:0.6px;">Параметры пользователя</span>
<svg style="left:0;top:0" width="1070" height="942" viewBox="0 0 1070 942"><defs><linearGradient id="b1" x1="0" y1="0" x2="0" y2="1"><stop offset="0" stop-color="#c4d6ee"/><stop offset="0.480" stop-color="#b4c8e4"/><stop offset="0.500" stop-color="#98b2d8"/><stop offset="1" stop-color="#b8cce8"/></linearGradient><linearGradient id="r1" x1="0" y1="0" x2="0" y2="1"><stop offset="0" stop-color="#e8a8a0"/><stop offset="0.480" stop-color="#d87868"/><stop offset="0.500" stop-color="#c83c28"/><stop offset="1" stop-color="#d86048"/></linearGradient></defs><rect x="390.5" y="232.5" width="22.6" height="16.5" fill="url(#b1)" stroke="#d0e0f4" stroke-width="1" rx="1.500"/><rect x="396.8" y="241.25" width="10" height="3.5" fill="#fff" stroke="#505868" stroke-width="0.900" rx="1"/><rect x="415.8" y="232.5" width="20.4" height="16.5" fill="url(#b1)" stroke="#d0e0f4" stroke-width="1" rx="1.500"/><rect x="421.5" y="236.25" width="9" height="8" fill="#e8eef8" stroke="#505868" stroke-width="1" rx="1"/><rect x="424" y="238.75" width="4" height="2.5" fill="#c0cce0" stroke="#505868" stroke-width="0.800"/><rect x="439.5" y="232.5" width="21" height="16.5" fill="url(#r1)" stroke="#e8c0c0" stroke-width="1" rx="1.500"/><g transform="translate(450,240.75)"><path d="M-3.500-2.500l7 5M3.500-2.500l-7 5" stroke="#7a3a38" stroke-width="3.500" stroke-linecap="square" fill="none"/><path d="M-3.500-2.500l7 5M3.500-2.500l-7 5" stroke="#fff" stroke-width="2" stroke-linecap="square" fill="none"/></g></svg><svg style="left:0;top:0" width="1070" height="942" viewBox="0 0 1070 942" shape-rendering="crispEdges"><rect x="105" y="235" width="7" height="3" fill="#e8e8e8" /><rect x="107" y="236" width="5" height="3" fill="#c0c0c0" /><rect x="108.5" y="238" width="2.5" height="7" fill="#e8e8f0" /><rect x="109" y="243" width="2" height="3" fill="#40a0ff" /><rect x="104.5" y="234.5" width="3" height="3" fill="#404040" /></svg>
<div style="left:100px;top:282px;width:359px;height:267px;background:#fff;border-left:1px solid #f5f5f5;border-top:1px solid #f5f5f5;border-right:1px solid #696969;border-bottom:1px solid #696969;box-shadow:inset -1px -1px 0 #a0a0a0;"></div>
<div style="left:102.5px;top:262.3px;width:56.5px;height:19.7px;border-top:1px solid #f5f5f5;border-left:1px solid #f5f5f5;border-radius:2px 0 0 0;"></div>
<div style="left:161px;top:262.3px;width:75px;height:19.7px;border-top:1px solid #f5f5f5;border-left:1px solid #f5f5f5;border-radius:2px 0 0 0;"></div>
<div style="left:274px;top:262.3px;width:44px;height:19.7px;border-top:1px solid #f5f5f5;border-left:1px solid #f5f5f5;border-radius:2px 0 0 0;"></div>
<div style="left:320px;top:262.3px;width:37px;height:19.7px;border-top:1px solid #f5f5f5;border-left:1px solid #f5f5f5;border-radius:2px 0 0 0;"></div>
<div style="left:359px;top:262.3px;width:45px;height:19.7px;border-top:1px solid #f5f5f5;border-left:1px solid #f5f5f5;border-radius:2px 0 0 0;"></div>
<div style="left:235px;top:260.5px;width:38px;height:22.5px;background:#fff;border-top:1px solid #f5f5f5;border-left:1px solid #f5f5f5;border-radius:2px 0 0 0;"></div>
<div style="left:158px;top:264px;width:2px;height:18px;background:#696969;border-left:1px solid #a0a0a0;"></div>
<div style="left:271px;top:261px;width:2px;height:21px;background:#696969;border-left:1px solid #a0a0a0;"></div>
<div style="left:317px;top:264px;width:2px;height:18px;background:#696969;border-left:1px solid #a0a0a0;"></div>
<div style="left:356px;top:264px;width:2px;height:18px;background:#696969;border-left:1px solid #a0a0a0;"></div>
<div style="left:403px;top:264px;width:2px;height:18px;background:#696969;border-left:1px solid #a0a0a0;"></div>
<span class="t" style="left:106.0px;top:268.2px;font-size:11px;line-height:11px;color:#000;letter-spacing:0.065px;"><u>Ж</u>урналы</span>
<span class="t" style="left:164.6px;top:268.2px;font-size:11px;line-height:11px;color:#000;letter-spacing:-0.278px;">О<u>ф</u>ормление</span>
<span class="t" style="left:240.0px;top:266.2px;font-size:11px;line-height:11px;color:#000;letter-spacing:0.109px;"><u>О</u>кна</span>
<span class="t" style="left:276.3px;top:268.2px;font-size:11px;line-height:11px;color:#000;letter-spacing:-0.272px;">От<u>ч</u>еты</span>
<span class="t" style="left:323.0px;top:268.2px;font-size:11px;line-height:11px;color:#000;letter-spacing:-0.184px;"><u>М</u>еню</span>
<span class="t" style="left:362.0px;top:268.2px;font-size:11px;line-height:11px;color:#000;letter-spacing:-0.146px;"><u>П</u>рочее</span>
<div style="left:110px;top:312px;width:340px;height:228px;background:#fff;border-left:1px solid #f5f5f5;border-top:1px solid #f5f5f5;border-right:1px solid #696969;border-bottom:1px solid #696969;box-shadow:inset -1px -1px 0 #a0a0a0;"></div>
<div style="left:174px;top:293.5px;width:43px;height:18.5px;border-top:1px solid #f5f5f5;border-left:1px solid #f5f5f5;border-radius:2px 0 0 0;"></div>
<div style="left:219px;top:293.5px;width:153px;height:18.5px;border-top:1px solid #f5f5f5;border-left:1px solid #f5f5f5;border-radius:2px 0 0 0;"></div>
<div style="left:374px;top:293.5px;width:46px;height:18.5px;border-top:1px solid #f5f5f5;border-left:1px solid #f5f5f5;border-radius:2px 0 0 0;"></div>
<div style="left:110px;top:291px;width:62px;height:22px;background:#fff;border-top:1px solid #f5f5f5;border-left:1px solid #f5f5f5;border-radius:2px 0 0 0;"></div>
<div style="left:171px;top:292px;width:2px;height:20px;background:#696969;border-left:1px solid #a0a0a0;"></div>
<div style="left:216px;top:295px;width:2px;height:17px;background:#696969;border-left:1px solid #a0a0a0;"></div>
<div style="left:371px;top:295px;width:2px;height:17px;background:#696969;border-left:1px solid #a0a0a0;"></div>
<div style="left:419px;top:295px;width:2px;height:17px;background:#696969;border-left:1px solid #a0a0a0;"></div>
<span class="t" style="left:115.0px;top:297.3px;font-size:11px;line-height:11px;color:#000;">Контролы</span>
<span class="t" style="left:175.0px;top:299.3px;font-size:11px;line-height:11px;color:#000;letter-spacing:0.081px;">Списки</span>
<span class="t" style="left:222.0px;top:299.3px;font-size:11px;line-height:11px;color:#000;letter-spacing:-0.081px;word-spacing:0.6px;">Списки (параметры отчетов)</span>
<span class="t" style="left:378.0px;top:299.3px;font-size:11px;line-height:11px;color:#000;letter-spacing:0.232px;">Тексты</span>
<span class="t" style="left:125.7px;top:332.3px;font-size:11px;line-height:11px;color:#000;letter-spacing:-0.057px;word-spacing:0.6px;">Действия установок шрифтов для контролов начнутся</span>
<span class="t" style="left:125.7px;top:349.7px;font-size:11px;line-height:11px;color:#000;letter-spacing:0.004px;word-spacing:0.6px;">после перезапуска программы.</span>
<span class="t" style="left:125.7px;top:383.7px;font-size:11px;line-height:11px;color:#000;letter-spacing:-0.124px;word-spacing:0.6px;">Размер шрифта контролов:</span>
<span class="t" style="left:124.7px;top:412.9px;font-size:11px;line-height:11px;color:#000;word-spacing:0.6px;">Размер шрифта подсказок:</span>
<span class="t" style="left:224.0px;top:451.7px;font-size:11px;line-height:11px;color:#000;letter-spacing:0.154px;">Фрейм:</span>
<span class="t" style="left:284.7px;top:480.7px;font-size:11px;line-height:11px;color:#000;letter-spacing:0.044px;word-spacing:0.6px;">Темная тема</span>
<span class="t" style="left:235.5px;top:508.4px;font-size:11px;line-height:11px;color:#000;letter-spacing:-0.398px;">Обои:</span>
<div style="left:267px;top:381px;width:69px;height:17px;background:#fff;border:1px solid #fff;border-top:1px solid #a0a0a0;border-left:1px solid #a0a0a0;box-shadow:inset 1px 1px 0 #696969, inset -1px -1px 0 #e3e3e3;"></div>
<div style="left:321px;top:383px;width:14px;height:14px;background:#f0f0f0;border:1px solid #fff;border-right:1px solid #696969;border-bottom:1px solid #696969;box-shadow:inset -1px -1px 0 #a0a0a0;"></div>
<svg style="left:325px;top:388px" width="5" height="4" shape-rendering="crispEdges"><path d="M0 0h5v1h-5zM1 1h3v2h-3zM2 3h1v1h-1z" fill="#000"/></svg>
<div style="left:267px;top:410px;width:69px;height:17px;background:#fff;border:1px solid #fff;border-top:1px solid #a0a0a0;border-left:1px solid #a0a0a0;box-shadow:inset 1px 1px 0 #696969, inset -1px -1px 0 #e3e3e3;"></div>
<div style="left:321px;top:412px;width:14px;height:14px;background:#f0f0f0;border:1px solid #fff;border-right:1px solid #696969;border-bottom:1px solid #696969;box-shadow:inset -1px -1px 0 #a0a0a0;"></div>
<svg style="left:325px;top:417px" width="5" height="4" shape-rendering="crispEdges"><path d="M0 0h5v1h-5zM1 1h3v2h-3zM2 3h1v1h-1z" fill="#000"/></svg>
<div style="left:267px;top:449px;width:142px;height:17px;background:#fff;border:1px solid #fff;border-top:1px solid #a0a0a0;border-left:1px solid #a0a0a0;box-shadow:inset 1px 1px 0 #696969, inset -1px -1px 0 #e3e3e3;"></div>
<div style="left:394px;top:451px;width:14px;height:14px;background:#f0f0f0;border:1px solid #fff;border-right:1px solid #696969;border-bottom:1px solid #696969;box-shadow:inset -1px -1px 0 #a0a0a0;"></div>
<svg style="left:398px;top:456px" width="5" height="4" shape-rendering="crispEdges"><path d="M0 0h5v1h-5zM1 1h3v2h-3zM2 3h1v1h-1z" fill="#000"/></svg>
<div style="left:267px;top:504px;width:157px;height:17px;background:#fff;border:1px solid #fff;border-top:1px solid #a0a0a0;border-left:1px solid #a0a0a0;box-shadow:inset 1px 1px 0 #696969, inset -1px -1px 0 #e3e3e3;"></div>
<div style="left:266px;top:479px;width:12px;height:12px;background:#fff;border:1px solid #fff;border-top:1px solid #a0a0a0;border-left:1px solid #a0a0a0;box-shadow:inset 1px 1px 0 #696969, inset -1px -1px 0 #e3e3e3;"></div>
<div style="left:342px;top:379px;width:100.5px;height:21.5px;background:#f0f0f0;border:1px solid #fff;border-right:1px solid #696969;border-bottom:1px solid #696969;box-shadow:inset -1px -1px 0 #a0a0a0;"></div>
<span class="t" style="left:351.8px;top:383.7px;font-size:11px;line-height:11px;color:#000;letter-spacing:-0.255px;word-spacing:0.6px;">По умолчанию 8</span>
<div style="left:427px;top:504px;width:18px;height:19.5px;background:#f0f0f0;border:1px solid #fff;border-right:1px solid #696969;border-bottom:1px solid #696969;box-shadow:inset -1px -1px 0 #a0a0a0;"></div>
<span class="t" style="left:432.0px;top:507.7px;font-size:11px;line-height:11px;color:#000;letter-spacing:-0.391px;">...</span>
<div style="left:191.5px;top:554.5px;width:86px;height:22.5px;background:#f0f0f0;border:1px solid #fff;border-right:1px solid #696969;border-bottom:1px solid #696969;box-shadow:inset -1px -1px 0 #a0a0a0;"></div>
<span class="t" style="left:212.3px;top:559.7px;font-size:11px;line-height:11px;color:#000;letter-spacing:0.033px;">Помощь</span>
<span class="t" style="left:311.4px;top:560.7px;font-size:11px;line-height:11px;color:#000;letter-spacing:-0.553px;"><u>O</u>K</span>
<span class="t" style="left:401.9px;top:560.7px;font-size:11px;line-height:11px;color:#000;letter-spacing:-0.171px;">О<u>т</u>менить</span>
<svg style="left:286px;top:558px" width="18" height="16" viewBox="0 0 18 16"><path d="M1 9l2-1.5 3 4C9 6 13 2.5 17 0.5l.5 1C13 4.500 9.500 9 6.500 15.500z" fill="#1f8a1f"/></svg>
<svg style="left:377px;top:558px" width="17" height="16" viewBox="0 0 17 16"><path d="M1.500 1l14 14M15 1L2 15" stroke="#a01818" stroke-width="2.200" fill="none"/></svg>
<svg style="left:104px;top:558px" width="16" height="14" viewBox="0 0 16 14"><rect width="16" height="14" fill="#e6eaf2"/><rect width="16" height="2.800" fill="#3a6ac4"/><path d="M7.60 4.32L8.40 4.32L8.84 5.62L9.37 5.84L10.60 5.23L11.17 5.80L10.56 7.03L10.78 7.56L12.08 8.00L12.08 8.80L10.78 9.24L10.56 9.77L11.17 11.00L10.60 11.57L9.37 10.96L8.84 11.18L8.40 12.48L7.60 12.48L7.16 11.18L6.63 10.96L5.40 11.57L4.83 11.00L5.44 9.77L5.22 9.24L3.92 8.80L3.92 8.00L5.22 7.56L5.44 7.03L4.83 5.80L5.40 5.23L6.63 5.84L7.16 5.62z" fill="#4a5a7a"/><circle cx="8" cy="8.400" r="1.400" fill="#f4f6fa"/></svg>
<div style="left:341px;top:378px;width:3px;height:3px;background:#fff;border:1px solid #c41424;"></div>
<div style="left:341px;top:388px;width:3px;height:3px;background:#fff;border:1px solid #c41424;"></div>
<div style="left:341px;top:398.5px;width:3px;height:3px;background:#fff;border:1px solid #c41424;"></div>
<div style="left:391px;top:378px;width:3px;height:3px;background:#fff;border:1px solid #c41424;"></div>
<div style="left:391px;top:398.5px;width:3px;height:3px;background:#fff;border:1px solid #c41424;"></div>
<div style="left:440px;top:378px;width:3px;height:3px;background:#fff;border:1px solid #c41424;"></div>
<div style="left:440px;top:388px;width:3px;height:3px;background:#fff;border:1px solid #c41424;"></div>
<div style="left:440px;top:398.5px;width:3px;height:3px;background:#fff;border:1px solid #c41424;"></div>
<div style="left:480px;top:228px;width:375px;height:356px;background:#1c2a3a;border-radius:6px 6px 0 0;"></div>
<div style="left:481px;top:229px;width:373px;height:354px;background:linear-gradient(#86add8,#bcd5ec 24px,#c8dcee 25px);border-radius:5px 5px 0 0;"></div>
<div style="left:481px;top:253px;width:373px;height:330px;background:#f0f0f0;border:2px solid #b9e1f3;border-left-color:#e4ebf7;border-top:none;"></div>
<div style="left:483px;top:253px;width:369px;height:328px;border:1px solid #e4f1f7;border-top:none;"></div>
<span class="t" style="left:505.6px;top:236.3px;font-size:12px;line-height:12px;color:#000;letter-spacing:-0.087px;word-spacing:0.6px;">Параметры пользователя</span>
<svg style="left:0;top:0" width="1070" height="942" viewBox="0 0 1070 942"><rect x="751" y="234" width="29.5" height="16" fill="url(#b1)" stroke="#6c8cbc" stroke-width="1" rx="1.500"/><rect x="760.75" y="242.5" width="10" height="3.5" fill="#fff" stroke="#505868" stroke-width="0.900" rx="1"/><rect x="785.3" y="234" width="29" height="16" fill="url(#b1)" stroke="#6c8cbc" stroke-width="1" rx="1.500"/><rect x="795.3" y="237.5" width="9" height="8" fill="#e8eef8" stroke="#505868" stroke-width="1" rx="1"/><rect x="797.8" y="240" width="4" height="2.5" fill="#c0cce0" stroke="#505868" stroke-width="0.800"/><rect x="818.5" y="234" width="31" height="16" fill="url(#r1)" stroke="#8a3428" stroke-width="1" rx="1.500"/><g transform="translate(834,242)"><path d="M-3.500-2.500l7 5M3.500-2.500l-7 5" stroke="#7a3a38" stroke-width="3.500" stroke-linecap="square" fill="none"/><path d="M-3.500-2.500l7 5M3.500-2.500l-7 5" stroke="#fff" stroke-width="2" stroke-linecap="square" fill="none"/></g></svg><svg style="left:0;top:0" width="1070" height="942" viewBox="0 0 1070 942"><path d="M490.500 240h5.500" fill="none" stroke="#102030" stroke-width="1.3" /><path d="M493.500 240v6.500" fill="none" stroke="#103050" stroke-width="1.3" /><path d="M490.500 238.500l2 1.500" fill="none" stroke="#000" stroke-width="0.9" /><path d="M494.300 242v4" fill="none" stroke="#2090e0" stroke-width="0.8" /></svg>
<div style="left:489px;top:284px;width:359px;height:267px;background:#f0f0f0;border-left:1px solid #fff;border-top:1px solid #fff;border-right:1px solid #696969;border-bottom:1px solid #696969;box-shadow:inset -1px -1px 0 #a0a0a0;"></div>
<div style="left:491.5px;top:264.3px;width:56.5px;height:19.7px;border-top:2px solid #fff;border-left:2px solid #fff;border-radius:2px 0 0 0;"></div>
<div style="left:550px;top:264.3px;width:75px;height:19.7px;border-top:2px solid #fff;border-left:2px solid #fff;border-radius:2px 0 0 0;"></div>
<div style="left:663px;top:264.3px;width:44px;height:19.7px;border-top:2px solid #fff;border-left:2px solid #fff;border-radius:2px 0 0 0;"></div>
<div style="left:709px;top:264.3px;width:37px;height:19.7px;border-top:2px solid #fff;border-left:2px solid #fff;border-radius:2px 0 0 0;"></div>
<div style="left:748px;top:264.3px;width:45px;height:19.7px;border-top:2px solid #fff;border-left:2px solid #fff;border-radius:2px 0 0 0;"></div>
<div style="left:624px;top:262.5px;width:38px;height:22.5px;background:#f0f0f0;border-top:2px solid #fff;border-left:2px solid #fff;border-radius:2px 0 0 0;"></div>
<div style="left:547px;top:266px;width:2px;height:18px;background:#696969;border-left:1px solid #a0a0a0;"></div>
<div style="left:660px;top:263px;width:2px;height:21px;background:#696969;border-left:1px solid #a0a0a0;"></div>
<div style="left:706px;top:266px;width:2px;height:18px;background:#696969;border-left:1px solid #a0a0a0;"></div>
<div style="left:745px;top:266px;width:2px;height:18px;background:#696969;border-left:1px solid #a0a0a0;"></div>
<div style="left:792px;top:266px;width:2px;height:18px;background:#696969;border-left:1px solid #a0a0a0;"></div>
<span class="t" style="left:495.0px;top:270.2px;font-size:11px;line-height:11px;color:#000;letter-spacing:0.065px;"><u>Ж</u>урналы</span>
<span class="t" style="left:553.6px;top:270.2px;font-size:11px;line-height:11px;color:#000;letter-spacing:-0.278px;">О<u>ф</u>ормление</span>
<span class="t" style="left:629.0px;top:268.2px;font-size:11px;line-height:11px;color:#000;letter-spacing:0.109px;"><u>О</u>кна</span>
<span class="t" style="left:665.3px;top:270.2px;font-size:11px;line-height:11px;color:#000;letter-spacing:-0.272px;">От<u>ч</u>еты</span>
<span class="t" style="left:712.0px;top:270.2px;font-size:11px;line-height:11px;color:#000;letter-spacing:-0.184px;"><u>М</u>еню</span>
<span class="t" style="left:751.0px;top:270.2px;font-size:11px;line-height:11px;color:#000;letter-spacing:-0.146px;"><u>П</u>рочее</span>
<div style="left:499px;top:314px;width:340px;height:228px;background:#f0f0f0;border-left:1px solid #fff;border-top:1px solid #fff;border-right:1px solid #696969;border-bottom:1px solid #696969;box-shadow:inset -1px -1px 0 #a0a0a0;"></div>
<div style="left:563px;top:295.5px;width:43px;height:18.5px;border-top:2px solid #fff;border-left:2px solid #fff;border-radius:2px 0 0 0;"></div>
<div style="left:608px;top:295.5px;width:153px;height:18.5px;border-top:2px solid #fff;border-left:2px solid #fff;border-radius:2px 0 0 0;"></div>
<div style="left:763px;top:295.5px;width:46px;height:18.5px;border-top:2px solid #fff;border-left:2px solid #fff;border-radius:2px 0 0 0;"></div>
<div style="left:499px;top:293px;width:62px;height:22px;background:#f0f0f0;border-top:2px solid #fff;border-left:2px solid #fff;border-radius:2px 0 0 0;"></div>
<div style="left:560px;top:294px;width:2px;height:20px;background:#696969;border-left:1px solid #a0a0a0;"></div>
<div style="left:605px;top:297px;width:2px;height:17px;background:#696969;border-left:1px solid #a0a0a0;"></div>
<div style="left:760px;top:297px;width:2px;height:17px;background:#696969;border-left:1px solid #a0a0a0;"></div>
<div style="left:808px;top:297px;width:2px;height:17px;background:#696969;border-left:1px solid #a0a0a0;"></div>
<span class="t" style="left:504.0px;top:299.3px;font-size:11px;line-height:11px;color:#000;">Контролы</span>
<span class="t" style="left:564.0px;top:301.3px;font-size:11px;line-height:11px;color:#000;letter-spacing:0.081px;">Списки</span>
<span class="t" style="left:611.0px;top:301.3px;font-size:11px;line-height:11px;color:#000;letter-spacing:-0.081px;word-spacing:0.6px;">Списки (параметры отчетов)</span>
<span class="t" style="left:767.0px;top:301.3px;font-size:11px;line-height:11px;color:#000;letter-spacing:0.232px;">Тексты</span>
<span class="t" style="left:514.7px;top:334.3px;font-size:11px;line-height:11px;color:#000;letter-spacing:-0.057px;word-spacing:0.6px;">Действия установок шрифтов для контролов начнутся</span>
<span class="t" style="left:514.7px;top:351.7px;font-size:11px;line-height:11px;color:#000;letter-spacing:0.004px;word-spacing:0.6px;">после перезапуска программы.</span>
<span class="t" style="left:514.7px;top:385.7px;font-size:11px;line-height:11px;color:#000;letter-spacing:-0.124px;word-spacing:0.6px;">Размер шрифта контролов:</span>
<span class="t" style="left:513.7px;top:414.9px;font-size:11px;line-height:11px;color:#000;word-spacing:0.6px;">Размер шрифта подсказок:</span>
<span class="t" style="left:613.0px;top:453.7px;font-size:11px;line-height:11px;color:#000;letter-spacing:0.154px;">Фрейм:</span>
<span class="t" style="left:673.7px;top:482.7px;font-size:11px;line-height:11px;color:#000;letter-spacing:0.044px;word-spacing:0.6px;">Темная тема</span>
<span class="t" style="left:624.5px;top:510.4px;font-size:11px;line-height:11px;color:#000;letter-spacing:-0.398px;">Обои:</span>
<div style="left:656px;top:383px;width:69px;height:17px;background:#fff;border:1px solid #fff;border-top:1px solid #a0a0a0;border-left:1px solid #a0a0a0;box-shadow:inset 1px 1px 0 #696969, inset -1px -1px 0 #e3e3e3;"></div>
<div style="left:659px;top:386px;width:50px;height:12px;background:#0078d7;"></div>
<div style="left:710px;top:385px;width:14px;height:14px;background:#f0f0f0;border:1px solid #fff;border-right:1px solid #696969;border-bottom:1px solid #696969;box-shadow:inset -1px -1px 0 #a0a0a0;"></div>
<svg style="left:714px;top:390px" width="5" height="4" shape-rendering="crispEdges"><path d="M0 0h5v1h-5zM1 1h3v2h-3zM2 3h1v1h-1z" fill="#000"/></svg>
<div style="left:656px;top:412px;width:69px;height:17px;background:#fff;border:1px solid #fff;border-top:1px solid #a0a0a0;border-left:1px solid #a0a0a0;box-shadow:inset 1px 1px 0 #696969, inset -1px -1px 0 #e3e3e3;"></div>
<div style="left:710px;top:414px;width:14px;height:14px;background:#f0f0f0;border:1px solid #fff;border-right:1px solid #696969;border-bottom:1px solid #696969;box-shadow:inset -1px -1px 0 #a0a0a0;"></div>
<svg style="left:714px;top:419px" width="5" height="4" shape-rendering="crispEdges"><path d="M0 0h5v1h-5zM1 1h3v2h-3zM2 3h1v1h-1z" fill="#000"/></svg>
<div style="left:656px;top:451px;width:142px;height:17px;background:#fff;border:1px solid #fff;border-top:1px solid #a0a0a0;border-left:1px solid #a0a0a0;box-shadow:inset 1px 1px 0 #696969, inset -1px -1px 0 #e3e3e3;"></div>
<div style="left:783px;top:453px;width:14px;height:14px;background:#f0f0f0;border:1px solid #fff;border-right:1px solid #696969;border-bottom:1px solid #696969;box-shadow:inset -1px -1px 0 #a0a0a0;"></div>
<svg style="left:787px;top:458px" width="5" height="4" shape-rendering="crispEdges"><path d="M0 0h5v1h-5zM1 1h3v2h-3zM2 3h1v1h-1z" fill="#000"/></svg>
<div style="left:656px;top:506px;width:157px;height:17px;background:#fff;border:1px solid #fff;border-top:1px solid #a0a0a0;border-left:1px solid #a0a0a0;box-shadow:inset 1px 1px 0 #696969, inset -1px -1px 0 #e3e3e3;"></div>
<div style="left:655px;top:481px;width:12px;height:12px;background:#fff;border:1px solid #fff;border-top:1px solid #a0a0a0;border-left:1px solid #a0a0a0;box-shadow:inset 1px 1px 0 #696969, inset -1px -1px 0 #e3e3e3;"></div>
<div style="left:731px;top:381px;width:100.5px;height:21.5px;background:#f0f0f0;border:1px solid #fff;border-right:1px solid #696969;border-bottom:1px solid #696969;box-shadow:inset -1px -1px 0 #a0a0a0;"></div>
<span class="t" style="left:740.8px;top:385.7px;font-size:11px;line-height:11px;color:#000;letter-spacing:-0.255px;word-spacing:0.6px;">По умолчанию 8</span>
<div style="left:816px;top:506px;width:18px;height:19.5px;background:#f0f0f0;border:1px solid #fff;border-right:1px solid #696969;border-bottom:1px solid #696969;box-shadow:inset -1px -1px 0 #a0a0a0;"></div>
<span class="t" style="left:821.0px;top:509.7px;font-size:11px;line-height:11px;color:#000;letter-spacing:-0.391px;">...</span>
<div style="left:580.5px;top:556.5px;width:86px;height:22.5px;background:#f0f0f0;border:1px solid #fff;border-right:1px solid #696969;border-bottom:1px solid #696969;box-shadow:inset -1px -1px 0 #a0a0a0;"></div>
<span class="t" style="left:601.3px;top:561.7px;font-size:11px;line-height:11px;color:#000;letter-spacing:0.033px;">Помощь</span>
<span class="t" style="left:700.4px;top:562.7px;font-size:11px;line-height:11px;color:#000;letter-spacing:-0.553px;"><u>O</u>K</span>
<span class="t" style="left:790.9px;top:562.7px;font-size:11px;line-height:11px;color:#000;letter-spacing:-0.171px;">О<u>т</u>менить</span>
<svg style="left:675px;top:560px" width="18" height="16" viewBox="0 0 18 16"><path d="M1 9l2-1.5 3 4C9 6 13 2.5 17 0.5l.5 1C13 4.500 9.500 9 6.500 15.500z" fill="#1f8a1f"/></svg>
<svg style="left:766px;top:560px" width="17" height="16" viewBox="0 0 17 16"><path d="M1.500 1l14 14M15 1L2 15" stroke="#a01818" stroke-width="2.200" fill="none"/></svg>
<svg style="left:493px;top:560px" width="16" height="14" viewBox="0 0 16 14"><rect width="16" height="14" fill="#e6eaf2"/><rect width="16" height="2.800" fill="#3a6ac4"/><path d="M7.60 4.32L8.40 4.32L8.84 5.62L9.37 5.84L10.60 5.23L11.17 5.80L10.56 7.03L10.78 7.56L12.08 8.00L12.08 8.80L10.78 9.24L10.56 9.77L11.17 11.00L10.60 11.57L9.37 10.96L8.84 11.18L8.40 12.48L7.60 12.48L7.16 11.18L6.63 10.96L5.40 11.57L4.83 11.00L5.44 9.77L5.22 9.24L3.92 8.80L3.92 8.00L5.22 7.56L5.44 7.03L4.83 5.80L5.40 5.23L6.63 5.84L7.16 5.62z" fill="#4a5a7a"/><circle cx="8" cy="8.400" r="1.400" fill="#f4f6fa"/></svg>
</body></html>
